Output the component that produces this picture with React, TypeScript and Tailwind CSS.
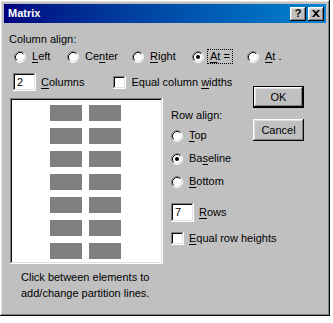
import React from 'react';

const raised =
  'shadow-[inset_-1px_-1px_#0a0a0a,inset_1px_1px_#ffffff,inset_-2px_-2px_#808080,inset_2px_2px_#dfdfdf]';
const sunken =
  'shadow-[inset_-1px_-1px_#ffffff,inset_1px_1px_#808080,inset_-2px_-2px_#dfdfdf,inset_2px_2px_#0a0a0a]';

const Radio: React.FC<{ checked?: boolean }> = ({ checked }) => (
  <svg width="12" height="12" viewBox="0 0 12 12" className="shrink-0">
    <circle cx="6" cy="6" r="5" fill="#ffffff" />
    <path d="M2.11 9.89 A5.5 5.5 0 0 1 9.89 2.11" stroke="#808080" fill="none" />
    <path d="M9.89 2.11 A5.5 5.5 0 0 1 2.11 9.89" stroke="#ffffff" fill="none" />
    <path d="M2.82 9.18 A4.5 4.5 0 0 1 9.18 2.82" stroke="#0a0a0a" fill="none" />
    <path d="M9.18 2.82 A4.5 4.5 0 0 1 2.82 9.18" stroke="#dfdfdf" fill="none" />
    {checked && <circle cx="6" cy="6" r="2" fill="#000000" />}
  </svg>
);

const Checkbox: React.FC = () => <div className={`w-[13px] h-[13px] bg-white shrink-0 ${sunken}`} />;

const U: React.FC<{ children: React.ReactNode }> = ({ children }) => <span className="underline underline-offset-2">{children}</span>;

const RadioItem: React.FC<{ w: string; checked?: boolean; focus?: boolean; children: React.ReactNode }> = ({
  w,
  checked,
  focus,
  children,
}) => (
  <div className={`flex items-center whitespace-nowrap ${w}`}>
    <Radio checked={checked} />
    <span className={focus ? 'ml-[4px] px-[2px] outline-1 outline-dotted outline-black' : 'ml-[6px]'}>{children}</span>
  </div>
);

const App: React.FC = () => {
  const rows = [0, 1, 2, 3, 4, 5, 6];

  return (
    <div className="w-[333px] h-[323px] bg-white" style={{ fontFamily: '"Liberation Sans", Arial, sans-serif' }}>
      <div className={`w-[330px] h-[316px] bg-[#c0c0c0] p-[4px] text-[11px] leading-[13px] text-black ${raised}`}>
        {/* Title bar */}
        <div className="h-[19px] flex items-center justify-between bg-gradient-to-r from-[#000080] to-[#1084d0] pl-[4px] pr-[2px]">
          <span className="text-white font-bold text-[11px]">Matrix</span>
          <div className="flex gap-[2px]">
            <div className={`w-[16px] h-[14px] bg-[#c0c0c0] flex items-center justify-center font-bold text-[11px] leading-none ${raised}`}>
              ?
            </div>
            <div className={`w-[16px] h-[14px] bg-[#c0c0c0] flex items-center justify-center ${raised}`}>
              <svg width="8" height="7" viewBox="0 0 8 7">
                <path d="M0 0h2l2 2 2-2h2L5 3.5 8 7H6L4 5 2 7H0l3-3.5z" fill="#000" />
              </svg>
            </div>
          </div>
        </div>

        <div className="pl-[5px]">
          <div className="mt-[10px]">Column align:</div>

          <div className="mt-[4px] h-[13px] flex items-center">
            <div className="ml-[5px] flex">
              <RadioItem w="w-[53px]">
                <U>L</U>eft
              </RadioItem>
              <RadioItem w="w-[65px]">
                Ce<U>n</U>ter
              </RadioItem>
              <RadioItem w="w-[60px]">
                <U>R</U>ight
              </RadioItem>
              <RadioItem w="w-[55px]" checked focus>
                <U>A</U>t =
              </RadioItem>
              <RadioItem w="w-[40px]">
                <U>A</U>t .
              </RadioItem>
            </div>
          </div>

          <div className="flex mt-[10px]">
            <div className="flex flex-col w-[240px] shrink-0">
              {/* Columns row */}
              <div className="flex items-center h-[18px] whitespace-nowrap">
                <div className={`ml-[4px] w-[23px] h-[18px] bg-white pl-[4px] flex items-center ${sunken}`}>2</div>
                <span className="ml-[5px]">
                  <U>C</U>olumns
                </span>
                <div className="ml-[29px] flex items-center">
                  <Checkbox />
                  <span className="ml-[5px]">
                    Equal column <U>w</U>idths
                  </span>
                </div>
              </div>

              <div className="flex mt-[7px]">
                <div className="flex flex-col">
                  {/* Preview */}
                  <div className={`ml-[1px] w-[153px] h-[166px] bg-white pt-[7px] pl-[40px] ${sunken}`}>
                    <div className="flex flex-col gap-[7px]">
                      {rows.map((r) => (
                        <div key={r} className="flex gap-[7px]">
                          <div className="w-[32px] h-[16px] bg-[#808080]" />
                          <div className="w-[32px] h-[16px] bg-[#808080]" />
                        </div>
                      ))}
                    </div>
                  </div>
                  <div className="ml-[12px] mt-[5px] leading-[16px] whitespace-nowrap">
                    Click between elements to
                    <br />
                    add/change partition lines.
                  </div>
                </div>

                {/* Row align */}
                <div className="ml-[8px] pt-[11px] flex flex-col whitespace-nowrap w-[70px] shrink-0">
                  <div>Row align:</div>
                  <div className="mt-[7px] flex flex-col gap-[10px]">
                    <RadioItem w="">
                      <U>T</U>op
                    </RadioItem>
                    <RadioItem w="" checked>
                      Ba<U>s</U>eline
                    </RadioItem>
                    <RadioItem w="">
                      <U>B</U>ottom
                    </RadioItem>
                  </div>
                  <div className="mt-[15px] flex items-center">
                    <div className={`w-[23px] h-[19px] bg-white pl-[4px] flex items-center ${sunken}`}>7</div>
                    <span className="ml-[5px]">
                      <U>R</U>ows
                    </span>
                  </div>
                  <div className="mt-[10px] flex items-center">
                    <Checkbox />
                    <span className="ml-[5px]">
                      <U>E</U>qual row heights
                    </span>
                  </div>
                </div>
              </div>
            </div>

            {/* Buttons */}
            <div className="ml-[4px] mt-[13px] flex flex-col gap-[11px] shrink-0">
              <div className="w-[51px] h-[22px] border border-black">
                <div className={`w-full h-full bg-[#c0c0c0] flex items-center justify-center ${raised}`}>OK</div>
              </div>
              <div className={`w-[51px] h-[22px] bg-[#c0c0c0] flex items-center justify-center ${raised}`}>Cancel</div>
            </div>
          </div>
        </div>
      </div>
    </div>
  );
};

export default App;
